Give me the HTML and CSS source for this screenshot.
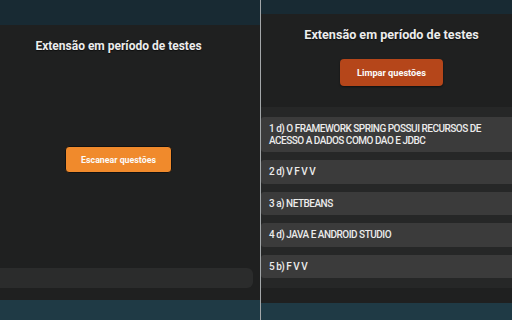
FILE: index.html
```html
<!doctype html>
<html>
<head>
  <meta charset="utf-8">
  <title>Extensão em período de testes</title>
  <link rel="stylesheet" href="styles.css">
</head>
<body>
  <!-- Popup before scanning -->
  <div class="pane pane-left">
    <div class="strip strip-top"></div>
    <div class="pane-body">
      <div class="popup popup-scan">
        <h1 class="popup-title">Extensão em período de testes</h1>
        <button class="action-button scan-button">Escanear questões</button>
        <div class="status-bar"></div>
      </div>
    </div>
    <div class="strip strip-bottom"></div>
  </div>

  <div class="divider"></div>

  <!-- Popup with results -->
  <div class="pane pane-right">
    <div class="strip strip-top"></div>
    <div class="pane-body">
      <div class="popup popup-results">
        <h1 class="popup-title">Extensão em período de testes</h1>
        <button class="action-button clear-button">Limpar questões</button>
        <ul class="answer-list">
          <li class="answer-item">1 d) O FRAMEWORK SPRING POSSUI RECURSOS DE ACESSO A DADOS COMO DAO E JDBC</li>
          <li class="answer-item">2 d) V F V V</li>
          <li class="answer-item">3 a) NETBEANS</li>
          <li class="answer-item">4 d) JAVA E ANDROID STUDIO</li>
          <li class="answer-item">5 b) F V V</li>
        </ul>
      </div>
    </div>
    <div class="strip strip-bottom"></div>
  </div>
</body>
</html>
```

FILE: styles.css
```css
body {
  margin: 0;
  height: 320px;
  display: flex;
  overflow: hidden;
  background-color: #1f2020;
  font-family: Roboto, "Liberation Sans", sans-serif;
  color: #ebebeb;
}
.pane {
  display: flex;
  flex-direction: column;
  overflow: hidden;
}
.pane-left {
  width: 260px;
}
.pane-right {
  flex: 1;
}
.divider {
  width: 1px;
  background-color: #a3a7a9;
}
.strip-top {
  background-color: #182a33;
}
.strip-bottom {
  background-color: #1f3a45;
}
.pane-left .strip-top {
  height: 25px;
}
.pane-left .strip-bottom {
  height: 20px;
}
.pane-right .strip-top {
  height: 14px;
}
.pane-right .strip-bottom {
  height: 17px;
}
.pane-body {
  flex: 1;
  background-color: #1f2020;
}

/* Popup contents */
.popup {
  display: flex;
  flex-direction: column;
  align-items: center;
}
.popup-scan {
  margin-left: -16px;
  width: 269px;
  padding-top: 14px;
}
.popup-results {
  padding-top: 14px;
  padding-left: 10px;
}
.popup-title {
  margin: 0;
  font-size: 12px;
  line-height: 14px;
  font-weight: bold;
  color: #ececec;
  text-shadow: 0 1px 1px rgba(0, 0, 0, 0.6);
}
.popup-results .popup-title {
  font-size: 12.6px;
}
.action-button {
  border: none;
  border-radius: 4px;
  color: #fbfbfb;
  font-family: Roboto, "Liberation Sans", sans-serif;
  font-size: 8.8px;
  font-weight: bold;
  height: 27px;
  padding: 0;
  cursor: pointer;
}
.scan-button {
  width: 107px;
  margin-top: 93px;
  background-color: #f08a2c;
  border: 1px solid #121212;
}
.clear-button {
  width: 103px;
  margin-top: 17px;
  background-color: #b5461a;
  box-shadow: 0 1px 2px rgba(0, 0, 0, 0.5);
  font-size: 9.2px;
}
.status-bar {
  align-self: stretch;
  margin-left: 8px;
  margin-top: 95px;
  height: 20px;
  border-radius: 6px;
  background-color: #2b2c2c;
}

/* Answer list */
.answer-list {
  list-style: none;
  margin: 21px 0 0 -10px;
  padding: 10px 0;
  align-self: stretch;
  display: flex;
  flex-direction: column;
  gap: 8px;
  background-color: #262727;
}
.answer-item {
  background-color: #3b3b3b;
  padding: 6px 12px 6px 8px;
  font-size: 10px;
  line-height: 11.5px;
  font-weight: 500;
  letter-spacing: -0.5px;
  color: #ececec;
  border-radius: 3px 0 0 3px;
}
```
